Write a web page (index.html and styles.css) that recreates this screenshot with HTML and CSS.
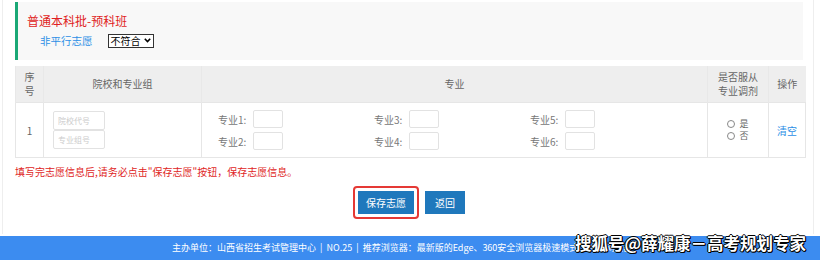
FILE: index.html
```html
<!DOCTYPE html>
<html lang="zh-CN">
<head>
    <meta charset="UTF-8">
    <title>志愿填报</title>
    <link rel="stylesheet" href="styles.css">
</head>
<body>
    <div class="page">
        <div class="batch">
            <div class="batch-title">普通本科批-预科班</div>
            <div class="batch-type">
                <span class="type-name">非平行志愿</span>
                <span class="fit-select">不符合<svg width="7" height="5" viewBox="0 0 7 5"><path d="M0.8 0.8 L3.5 3.6 L6.2 0.8" fill="none" stroke="#000" stroke-width="1.6"/></svg></span>
            </div>
        </div>

        <table class="wish-table">
            <colgroup>
                <col style="width:28px">
                <col style="width:158px">
                <col style="width:506px">
                <col style="width:61px">
                <col>
            </colgroup>
            <thead>
                <tr>
                    <th>序<br>号</th>
                    <th>院校和专业组</th>
                    <th>专业</th>
                    <th>是否服从<br>专业调剂</th>
                    <th>操作</th>
                </tr>
            </thead>
            <tbody>
                <tr>
                    <td>1</td>
                    <td class="school-cell">
                        <input class="code-input" placeholder="院校代号">
                        <input class="code-input" placeholder="专业组号">
                    </td>
                    <td class="major-cell">
                        <div class="majors">
                            <label class="major">专业1:<input></label>
                            <label class="major">专业3:<input></label>
                            <label class="major">专业5:<input></label>
                            <label class="major">专业2:<input></label>
                            <label class="major">专业4:<input></label>
                            <label class="major">专业6:<input></label>
                        </div>
                    </td>
                    <td class="radio-cell">
                        <div class="radio"><span class="dot"></span><span>是</span></div>
                        <div class="radio"><span class="dot"></span><span>否</span></div>
                    </td>
                    <td><a class="clear-link">清空</a></td>
                </tr>
            </tbody>
        </table>

        <p class="notice">填写完志愿信息后,请务必点击"保存志愿"按钮，保存志愿信息。</p>

        <div class="actions">
            <span class="save-wrap"><button class="btn save">保存志愿</button></span>
            <button class="btn back">返回</button>
        </div>
    </div>

    <div class="footer">
        <span class="footer-text">主办单位：山西省招生考试管理中心 &nbsp;| &nbsp;NO.25 &nbsp;| &nbsp;推荐浏览器：最新版的Edge、360安全浏览器极速模式、谷歌浏览器</span>
        <span class="watermark">搜狐号@薛耀康－高考规划专家</span>
    </div>
</body>
</html>
```

FILE: styles.css
```css
body {
    margin: 0;
    background: #fff;
    font-family: "Noto Sans CJK SC", "Noto Sans", sans-serif;
    color: #666;
}

.page {
    margin: 0 6px 0 2px;
    padding: 2px 10px 0 12px;
    border-left: 1px solid #eee;
    border-right: 1px solid #eee;
    height: 234px;
    box-sizing: border-box;
}

.batch {
    height: 58px;
    background: #f8f8f8;
    border-left: 3px solid #1aa876;
    padding: 11px 0 0 9px;
    box-sizing: border-box;
}

.batch-title {
    color: #e01e24;
    font-size: 12px;
    line-height: 15px;
}

.batch-type {
    margin: 5px 0 0 13px;
    display: flex;
    align-items: center;
    gap: 15px;
}

.type-name {
    color: #2d8fe6;
    font-size: 10.5px;
}

.fit-select {
    display: flex;
    align-items: center;
    gap: 3px;
    height: 12px;
    padding: 0 2px;
    border: 1px solid #333;
    background: #fff;
    color: #000;
    font-size: 10px;
    line-height: 12px;
}

.wish-table {
    margin-top: 6px;
    width: 791px;
    border-collapse: collapse;
    table-layout: fixed;
    font-size: 10px;
}

.wish-table th {
    background: #eeeeee;
    height: 36px;
    font-weight: normal;
    color: #666;
    line-height: 14px;
    padding: 0;
    border-left: 1px solid #e8e8e8;
}

.wish-table td {
    height: 54px;
    padding: 0;
    text-align: center;
    border: 1px solid #e6e6e6;
}

.school-cell {
    text-align: left !important;
    padding-left: 9px !important;
}

.code-input {
    display: block;
    width: 52px;
    height: 19px;
    box-sizing: border-box;
    border: 1px solid #e2e2e2;
    border-radius: 2px;
    font-family: "Noto Sans CJK SC", sans-serif;
    font-size: 8px;
    padding: 0 4px;
}

.code-input::placeholder {
    color: #ccc;
}

.majors {
    display: grid;
    grid-template-columns: repeat(3, 156px);
    row-gap: 4px;
    padding-left: 16px;
}

.major {
    display: flex;
    align-items: center;
    gap: 7px;
    color: #777;
}

.major input {
    width: 30px;
    height: 18px;
    box-sizing: border-box;
    border: 1px solid #e2e2e2;
    border-radius: 2px;
}

.radio-cell {
    color: #666;
    font-size: 9px;
}

.radio {
    display: flex;
    align-items: center;
    justify-content: center;
    gap: 4px;
    height: 12px;
    line-height: 12px;
}

.dot {
    width: 6px;
    height: 6px;
    border: 1px solid #888;
    border-radius: 50%;
}

.clear-link {
    color: #2d8fe6;
    font-size: 10px;
}

.notice {
    margin: 8px 0 0 0;
    color: #e01e24;
    font-size: 10px;
    line-height: 12px;
}

.actions {
    margin-top: 13px;
    display: flex;
    justify-content: center;
    align-items: flex-start;
    gap: 6px;
}

.save-wrap {
    border: 2px solid #e53935;
    border-radius: 4px;
    padding: 3px;
    margin-top: -5px;
}

.btn {
    background: #1f78bc;
    color: #fff;
    border: none;
    height: 23px;
    padding: 0;
    font-family: "Noto Sans CJK SC", sans-serif;
    font-size: 10px;
    display: block;
}

.save {
    width: 56px;
}

.back {
    width: 40px;
}

.footer {
    position: relative;
    margin-top: 2px;
    height: 24px;
    background: #3c8cf0;
    color: #fff;
    font-size: 9px;
    line-height: 24px;
    padding-left: 172px;
    white-space: nowrap;
}

.watermark {
    position: absolute;
    left: 575px;
    top: -3px;
    font-size: 16.5px;
    font-weight: bold;
    line-height: 20px;
    color: #fff;
    text-shadow: 1px 1px 0 #000, -1px 0 0 #000, 0 -1px 0 #000, 1px 0 0 #000, 0 1px 0 #000;
}
```
